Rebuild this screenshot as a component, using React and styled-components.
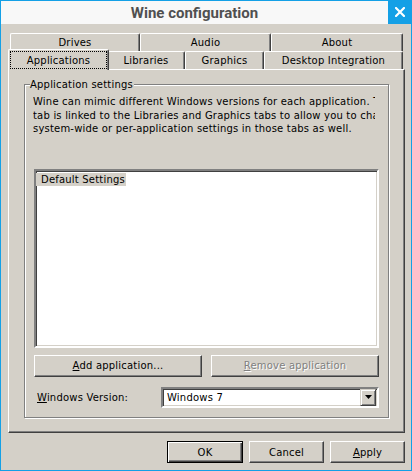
import React from 'react';
import styled, { createGlobalStyle } from 'styled-components';

const Global = createGlobalStyle`
  html, body { margin: 0; padding: 0; background: #ffffff; }
  body { font-family: "DejaVu Sans", "Noto Sans", sans-serif; font-size: 10px; letter-spacing: 0.2px; color: #000; }
  * { box-sizing: border-box; }
`;

const BLUE = '#14a0e6';
const FACE = '#d4d0c8';

const Window = styled.div`
  width: 412px;
  height: 471px;
  border: 1px solid ${BLUE};
  display: flex;
  flex-direction: column;
  background: ${FACE};
`;

const TitleBar = styled.div`
  height: 23px;
  flex-shrink: 0;
  display: flex;
  background: #f8f8f8;
`;

const Title = styled.div`
  flex: 1;
  display: flex;
  align-items: center;
  justify-content: center;
  font-family: Roboto, "Noto Sans", sans-serif;
  font-weight: 700;
  font-size: 15px;
  letter-spacing: 0;
  color: #505050;
`;

const CloseButton = styled.div`
  width: 23px;
  margin-top: -1px;
  background: ${BLUE};
  display: flex;
  align-items: center;
  justify-content: center;
`;

const Body = styled.div`
  flex: 1;
  display: flex;
  flex-direction: column;
  padding: 9px 0 0 7px;
`;

const TabStrip = styled.div`
  width: 393px;
  margin-left: 2px;
  display: flex;
  flex-direction: column;
`;

const TabRow = styled.div`
  display: flex;
  height: 18px;
`;

const Tab = styled.div`
  position: relative;
  width: ${p => p.$w}px;
  height: 18px;
  background: ${FACE};
  border-top: 1px solid #fff;
  border-left: 1px solid #fff;
  border-right: 1px solid #404040;
  box-shadow: inset -1px 0 #808080;
  border-top-left-radius: 2px;
  border-top-right-radius: 2px;
  display: flex;
  align-items: center;
  justify-content: center;
  white-space: nowrap;
  padding-bottom: 1px;
`;

const ActiveTab = styled(Tab)`
  z-index: 2;
  width: ${p => p.$w + 4}px;
  height: 21px;
  margin: -2px -2px -1px -2px;
  padding: 1px 1px 1px 1px;
  align-items: stretch;
`;

const FocusRing = styled.div`
  flex: 1;
  border: 1px dotted #000;
  display: flex;
  align-items: center;
  justify-content: center;
`;

const Panel = styled.div`
  position: relative;
  z-index: 1;
  width: 397px;
  height: 364px;
  background: ${FACE};
  border-top: 1px solid #fff;
  border-left: 1px solid #fff;
  border-right: 1px solid #404040;
  border-bottom: 1px solid #404040;
  box-shadow: inset -1px -1px #808080;
  padding: 14px 0 0 15px;
`;

const GroupBox = styled.div`
  position: relative;
  width: 365px;
  height: 334px;
  border: 1px solid #808080;
  box-shadow: inset 1px 1px #fff, 1px 1px #fff;
  padding: 10px 0 0 8px;
  display: flex;
  flex-direction: column;
`;

const GroupTitle = styled.div`
  position: absolute;
  top: -7px;
  left: 5px;
  padding: 0 1px 0 0;
  background: ${FACE};
  line-height: 13px;
`;

const Description = styled.div`
  width: 342px;
  overflow: hidden;
  line-height: 13.5px;
`;

const DescLine = styled.div`
  white-space: nowrap;
`;

const ListBox = styled.div`
  margin-top: 33px;
  margin-left: 1px;
  width: 345px;
  height: 179px;
  background: #fff;
  border: 2px solid;
  border-color: #808080 #fff #fff #808080;
  box-shadow: inset 1px 1px #404040, inset -1px -1px ${FACE};
  padding: 2px 0 0 0;
`;

const ListItem = styled.div`
  display: inline-block;
  height: 13px;
  line-height: 13px;
  padding: 0 1px 0 5px;
  background: ${p => (p.$selected ? FACE : 'transparent')};
`;

const ButtonRow = styled.div`
  margin-top: 7px;
  margin-left: 1px;
  display: flex;
  gap: 9px;
`;

const Button = styled.div`
  width: ${p => p.$w}px;
  height: 22px;
  background: ${FACE};
  border: 1px solid;
  border-color: #fff #404040 #404040 #fff;
  box-shadow: inset -1px -1px #808080;
  display: flex;
  align-items: center;
  justify-content: center;
  white-space: nowrap;
  color: ${p => (p.$disabled ? '#808080' : '#000')};
  text-shadow: ${p => (p.$disabled ? '1px 1px #fff' : 'none')};
`;

const DefaultButton = styled(Button)`
  border: 1px solid #000;
  box-shadow: inset 1px 1px #fff, inset -1px -1px #404040, inset -2px -2px #808080;
`;

const VersionRow = styled.div`
  margin-top: 10px;
  margin-left: 1px;
  display: flex;
  align-items: center;
`;

const Label = styled.div`
  width: 127px;
  padding-left: 3px;
`;

const Combo = styled.div`
  width: 218px;
  height: 21px;
  background: #fff;
  border: 2px solid;
  border-color: #808080 #fff #fff #808080;
  box-shadow: inset 1px 1px #404040, inset -1px -1px ${FACE};
  display: flex;
  align-items: center;
  padding: 1px 1px 1px 2px;
`;

const ComboText = styled.div`
  flex: 1;
  padding-left: 2px;
`;

const ComboButton = styled.div`
  width: 16px;
  height: 17px;
  background: ${FACE};
  border: 1px solid;
  border-color: ${FACE} #404040 #404040 ${FACE};
  box-shadow: inset 1px 1px #fff, inset -1px -1px #808080;
  display: flex;
  align-items: center;
  justify-content: center;
`;

const Footer = styled.div`
  width: 397px;
  margin-top: 8px;
  display: flex;
  justify-content: flex-end;
  gap: 6px;
`;

const Accel = styled.span`
  text-decoration: underline;
`;

export default function App() {
  return (
    <>
      <Global />
      <Window>
        <TitleBar>
          <Title>Wine configuration</Title>
          <CloseButton>
            <svg width="10" height="10" viewBox="0 0 10 10">
              <path d="M1 1 L9 9 M9 1 L1 9" stroke="#fff" strokeWidth="2.2" strokeLinecap="square" />
            </svg>
          </CloseButton>
        </TitleBar>
        <Body>
          <TabStrip>
            <TabRow>
              <Tab $w={130}>Drives</Tab>
              <Tab $w={131}>Audio</Tab>
              <Tab $w={132}>About</Tab>
            </TabRow>
            <TabRow>
              <ActiveTab $w={97}>
                <FocusRing>Applications</FocusRing>
              </ActiveTab>
              <Tab $w={78}>Libraries</Tab>
              <Tab $w={79}>Graphics</Tab>
              <Tab $w={139}>Desktop Integration</Tab>
            </TabRow>
          </TabStrip>
          <Panel>
            <GroupBox>
              <GroupTitle>Application settings</GroupTitle>
              <Description>
                <DescLine>Wine can mimic different Windows versions for each application.  This</DescLine>
                <DescLine>tab is linked to the Libraries and Graphics tabs to allow you to change</DescLine>
                <DescLine>system-wide or per-application settings in those tabs as well.</DescLine>
              </Description>
              <ListBox>
                <ListItem $selected>Default Settings</ListItem>
              </ListBox>
              <ButtonRow>
                <Button $w={168}><span><Accel>A</Accel>dd application...</span></Button>
                <Button $w={168} $disabled><span><Accel>R</Accel>emove application</span></Button>
              </ButtonRow>
              <VersionRow>
                <Label><Accel>W</Accel>indows Version:</Label>
                <Combo>
                  <ComboText>Windows 7</ComboText>
                  <ComboButton>
                    <svg width="7" height="4" viewBox="0 0 7 4">
                      <path d="M0 0 H7 L3.5 4 Z" fill="#000" />
                    </svg>
                  </ComboButton>
                </Combo>
              </VersionRow>
            </GroupBox>
          </Panel>
          <Footer>
            <DefaultButton $w={76}>OK</DefaultButton>
            <Button $w={75}>Cancel</Button>
            <Button $w={75}><span><Accel>A</Accel>pply</span></Button>
          </Footer>
        </Body>
      </Window>
    </>
  );
}
